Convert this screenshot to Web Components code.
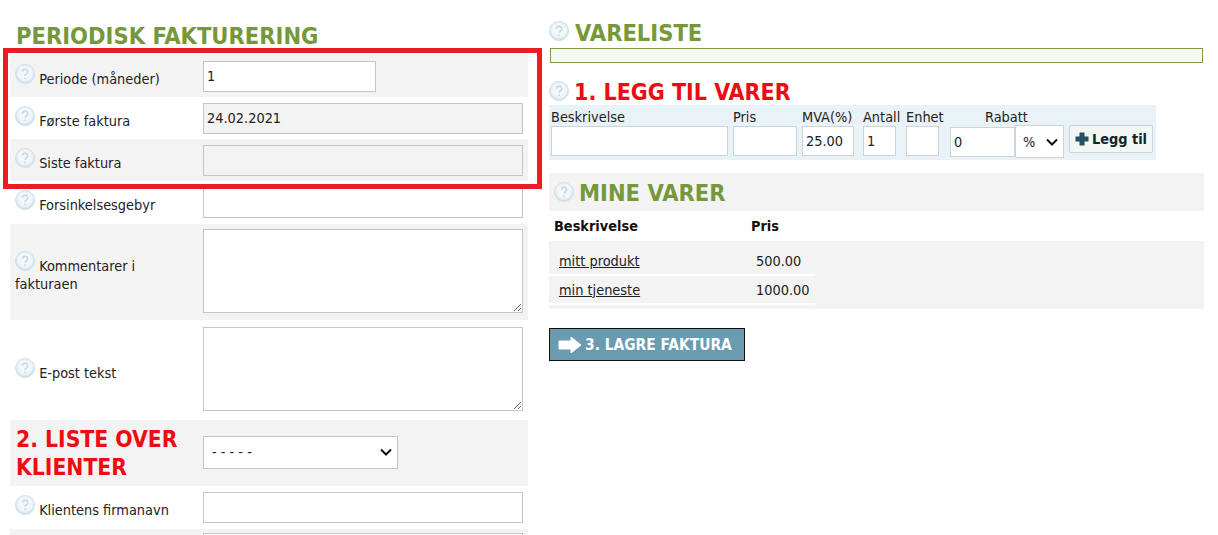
<!DOCTYPE html>
<html lang="no">
<head>
<meta charset="utf-8">
<title>Periodisk fakturering</title>
<style>
  html, body { margin: 0; height: 535px; overflow: hidden; background: #fff; }
  body { font-family: "DejaVu Sans Condensed", "DejaVu Sans", sans-serif; font-size: 14.4px; color: #222; }
</style>
</head>
<body>
<invoice-page>
  <div slot="left">
    <page-heading tone="green" flush>PERIODISK FAKTURERING</page-heading>
    <form-row height="42" shade>Periode (måneder)<input-box slot="control" width="173" value="1"></input-box></form-row>
    <form-row height="42">Første faktura<input-box slot="control" value="24.02.2021" disabled></input-box></form-row>
    <form-row height="42" shade>Siste faktura<input-box slot="control" disabled></input-box></form-row>
    <form-row height="43">Forsinkelsesgebyr<input-box slot="control"></input-box></form-row>
    <form-row height="96" shade>Kommentarer i fakturaen<input-box slot="control" multiline></input-box></form-row>
    <form-row height="100">E-post tekst<input-box slot="control" multiline></input-box></form-row>
    <client-select></client-select>
    <form-row height="43">Klientens firmanavn<input-box slot="control"></input-box></form-row>
    <form-row height="39" shade bare><input-box slot="control"></input-box></form-row>
  </div>
  <div slot="right">
    <page-heading tone="green" help>VARELISTE</page-heading>
    <status-bar></status-bar>
    <page-heading tone="red" help>1. LEGG TIL VARER</page-heading>
    <add-item-bar></add-item-bar>
    <item-list>
      <item-row name="mitt produkt" price="500.00"></item-row>
      <item-row name="min tjeneste" price="1000.00"></item-row>
    </item-list>
    <save-button>3. LAGRE FAKTURA</save-button>
  </div>
</invoice-page>

<script>
const HELP_ICON = `
  <svg width="20" height="20" viewBox="0 0 20 20" aria-hidden="true">
    <defs>
      <radialGradient id="q" cx="50%" cy="45%" r="55%">
        <stop offset="0" stop-color="#f8fbfc"/>
        <stop offset="0.68" stop-color="#eff5f8"/>
        <stop offset="1" stop-color="#c6dbe7"/>
      </radialGradient>
    </defs>
    <circle cx="10" cy="10" r="9.500" fill="url(#q)" stroke="#cfe0ea" stroke-width="1"/>
    <path d="M7.600 7.800a2.500 2.500 0 1 1 3.600 2.200c-.8.4-1.200.9-1.200 1.800" fill="none" stroke="#c9d5dc" stroke-width="1.400"/>
    <circle cx="10" cy="14.200" r="0.900" fill="#c9d5dc"/>
  </svg>`;

// chevron used by both dropdowns, native arrow is too thin
const CHEVRON = "url(\"data:image/svg+xml,%3Csvg xmlns='http://www.w3.org/2000/svg' width='12' height='8'%3E%3Cpath d='M1 1.500l5 5 5-5' fill='none' stroke='%23111' stroke-width='2'/%3E%3C/svg%3E\")";

class HelpIcon extends HTMLElement {
  constructor() {
    super();
    this.attachShadow({ mode: 'open' });
    this.shadowRoot.innerHTML = `
      <style>
        :host { display: inline-block; width: 20px; height: 20px; line-height: 0; }
      </style>
      ${HELP_ICON}`;
  }
}

class PageHeading extends HTMLElement {
  constructor() {
    super();
    this.attachShadow({ mode: 'open' });
  }

  connectedCallback() {
    const help = this.hasAttribute('help') ? '<help-icon></help-icon>' : '';
    this.shadowRoot.innerHTML = `
      <style>
        :host { display: flex; align-items: center; gap: 5px; height: 32px; box-sizing: border-box; font-weight: 700; font-size: 23px; color: #ee0b12; }
        :host([tone="green"]) { color: #76983a; font-size: 23.500px; gap: 6px; padding-top: 2px; }
        :host([tone="green"]) help-icon { margin-top: -4px; }
        :host([flush]) { padding-left: 6px; height: 39px; align-items: flex-end; padding-bottom: 5px; }
        help-icon { margin-top: -2px; }
      </style>
      ${help}<slot></slot>`;
  }
}

class FormRow extends HTMLElement {
  constructor() {
    super();
    this.attachShadow({ mode: 'open' });
  }

  connectedCallback() {
    const label = this.hasAttribute('bare')
      ? '<div></div>'
      : '<div class="label"><help-icon></help-icon> <slot></slot></div>';
    this.shadowRoot.innerHTML = `
      <style>
        :host { display: grid; grid-template-columns: 193px 1fr; align-items: center; height: ${this.getAttribute('height')}px; padding-right: 5px; box-sizing: border-box; }
        :host([shade]) { background: #f3f3f3; }
        .label { padding: 0 15px 0 5px; line-height: 18px; color: #222; }
        help-icon { vertical-align: -1px; position: relative; top: -1px; }
      </style>
      ${label}
      <div><slot name="control"></slot></div>`;
  }
}

class InputBox extends HTMLElement {
  constructor() {
    super();
    this.attachShadow({ mode: 'open' });
  }

  connectedCallback() {
    const width = this.getAttribute('width');
    const value = this.getAttribute('value') || '';
    const field = this.hasAttribute('multiline')
      ? '<textarea></textarea>'
      : `<input type="text" value="${value}" ${this.hasAttribute('disabled') ? 'disabled' : ''}>`;
    this.shadowRoot.innerHTML = `
      <style>
        :host { display: block; width: ${width ? width + 'px' : '320px'}; }
        input, textarea {
          display: block; width: 100%; height: 31px; box-sizing: border-box; margin: 0;
          border: 1px solid #c6c6c6; padding: 0 3px; background: #fff; color: #222;
          font: 14.400px "DejaVu Sans Condensed", "DejaVu Sans", sans-serif; border-radius: 0; outline: none;
        }
        input[disabled] { background: #f3f3f3; color: #222; opacity: 1; }
        textarea { height: 84px; margin-top: -2px; }
      </style>
      ${field}`;
  }
}

class ClientSelect extends HTMLElement {
  constructor() {
    super();
    this.attachShadow({ mode: 'open' });
    this.shadowRoot.innerHTML = `
      <style>
        :host { display: grid; grid-template-columns: 193px 1fr; align-items: center; height: 66px; background: #f3f3f3; }
        h2 { margin: 0; padding-left: 6px; font-size: 22.700px; line-height: 28px; font-weight: 700; color: #ee0b12; }
        select {
          display: block; width: 195px; height: 33px; margin-top: -2px; box-sizing: border-box; border: 1px solid #c6c6c6; color: #222; padding-left: 8px; border-radius: 0;
          font: 14.400px "DejaVu Sans Condensed", "DejaVu Sans", sans-serif;
          appearance: none; background: #fff ${CHEVRON} no-repeat right 5px center;
        }
      </style>
      <h2>2. LISTE OVER KLIENTER</h2>
      <div><select><option>- - - - -</option></select></div>`;
  }
}

class StatusBar extends HTMLElement {
  constructor() {
    super();
    this.attachShadow({ mode: 'open' });
    this.shadowRoot.innerHTML = `
      <style>
        :host { display: block; height: 15px; margin: 0 1px 13px 1px; box-sizing: border-box; border: 1px solid #7c9a47; background: #f5fbee; }
      </style>`;
  }
}

class AddItemBar extends HTMLElement {
  constructor() {
    super();
    this.attachShadow({ mode: 'open' });
    const column = (label, width, gap, value = '') => `
      <div class="col" style="width:${width}px;margin-left:${gap}px">
        <span>${label}</span><input type="text" value="${value}">
      </div>`;
    this.shadowRoot.innerHTML = `
      <style>
        :host { display: flex; width: 607px; height: 55px; margin-top: -3px; background: #e9f2f6; box-sizing: border-box; padding-left: 2px; font-size: 14.400px; color: #222; }
        .col { display: flex; flex-direction: column; flex: none; }
        span { height: 21px; line-height: 24px; white-space: nowrap; }
        input, select {
          height: 30px; width: 100%; box-sizing: border-box; margin: 0; padding: 0 3px;
          border: 1px solid #ccd4d8; background: #fff; color: #222; border-radius: 0;
          font: 14.400px "DejaVu Sans Condensed", "DejaVu Sans", sans-serif;
        }
        .rabatt span { padding-left: 35px; }
        .rabatt input { width: 65px; margin-top: 1px; flex: none; }
        select { width: 49px; height: 33px; padding: 0 0 0 7px; margin-top: -1px; flex: none; appearance: none; background: #fff ${CHEVRON} no-repeat right 5px center; }
        button {
          flex: none; width: 84px; height: 28px; margin: 20px 0 0 5px; padding: 0; display: flex; align-items: center; justify-content: center; gap: 3px;
          border: 1px solid #ccd4d8; background: #f3f7f3; color: #10252c; border-radius: 2px;
          font: 700 14.400px "DejaVu Sans Condensed", "DejaVu Sans", sans-serif;
        }
      </style>
      ${column('Beskrivelse', 177, 0)}
      ${column('Pris', 64, 5)}
      ${column('MVA(%)', 52, 5, '25.00')}
      ${column('Antall', 33, 9, '1')}
      ${column('Enhet', 33, 10)}
      <div class="col rabatt" style="width:114px;margin-left:11px">
        <span>Rabatt</span>
        <div style="display:flex;align-items:flex-start"><input type="text" value="0"><select><option>%</option></select></div>
      </div>
      <button>
        <svg width="14" height="14" viewBox="0 0 14 14" aria-hidden="true"><path d="M4.500 .5h5v4h4v5h-4v4h-5v-4h-4v-5h4z" fill="#24505f"/></svg>
        Legg til
      </button>`;
  }
}

class ItemList extends HTMLElement {
  constructor() {
    super();
    this.attachShadow({ mode: 'open' });
    this.shadowRoot.innerHTML = `
      <style>
        :host { display: block; margin-top: 13px; }
        .title { display: flex; align-items: center; gap: 5px; height: 38px; box-sizing: border-box; padding: 2px 0 0 5px; background: #f3f3f3; font-size: 23.500px; font-weight: 700; color: #76983a; }
        .title help-icon { margin-top: -3px; }
        .head { display: flex; height: 30px; align-items: center; font-weight: 700; color: #111; padding-left: 5px; }
        .head span:first-child { width: 197px; }
        .rows { background: #f3f3f3; padding: 6px 0 4px; }
      </style>
      <div class="title"><help-icon></help-icon>MINE VARER</div>
      <div class="head"><span>Beskrivelse</span><span>Pris</span></div>
      <div class="rows"><slot></slot></div>`;
  }
}

class ItemRow extends HTMLElement {
  constructor() {
    super();
    this.attachShadow({ mode: 'open' });
  }

  connectedCallback() {
    this.shadowRoot.innerHTML = `
      <style>
        :host { display: flex; width: 266px; height: 29px; box-sizing: border-box; align-items: center; padding-left: 10px; border-bottom: 2px solid #fff; }
        a { width: 197px; color: #222; text-decoration: underline; }
      </style>
      <a href="#">${this.getAttribute('name')}</a><span>${this.getAttribute('price')}</span>`;
  }
}

class SaveButton extends HTMLElement {
  constructor() {
    super();
    this.attachShadow({ mode: 'open' });
    this.shadowRoot.innerHTML = `
      <style>
        :host { display: flex; align-items: center; gap: 3px; width: 196px; height: 33px; margin-top: 19px; box-sizing: border-box; padding-left: 8px; border: 1px solid #111; background: #6b9bb0; color: #fff; font-size: 15.400px; font-weight: 700; white-space: nowrap; }
      </style>
      <svg width="24" height="16" viewBox="0 0 24 16" aria-hidden="true"><path d="M1 4h12V0l10 8-10 8v-4H1z" fill="#fff" stroke="#fff" stroke-linejoin="round"/></svg>
      <slot></slot>`;
  }
}

class InvoicePage extends HTMLElement {
  constructor() {
    super();
    this.attachShadow({ mode: 'open' });
    this.shadowRoot.innerHTML = `
      <style>
        :host { display: flex; position: relative; height: 535px; overflow: hidden; padding: 16px 0 0 10px; box-sizing: border-box; }
        .left { width: 518px; flex: none; }
        .right { width: 655px; flex: none; margin-left: 21px; }
        .marker { position: absolute; left: 3px; top: 48px; width: 539px; height: 141px; box-sizing: border-box; border: 5px solid #ed1c24; pointer-events: none; }
      </style>
      <div class="left"><slot name="left"></slot></div>
      <div class="right"><slot name="right"></slot></div>
      <div class="marker"></div>`;
  }
}

customElements.define('help-icon', HelpIcon);
customElements.define('page-heading', PageHeading);
customElements.define('form-row', FormRow);
customElements.define('input-box', InputBox);
customElements.define('client-select', ClientSelect);
customElements.define('status-bar', StatusBar);
customElements.define('add-item-bar', AddItemBar);
customElements.define('item-list', ItemList);
customElements.define('item-row', ItemRow);
customElements.define('save-button', SaveButton);
customElements.define('invoice-page', InvoicePage);
</script>
</body>
</html>
